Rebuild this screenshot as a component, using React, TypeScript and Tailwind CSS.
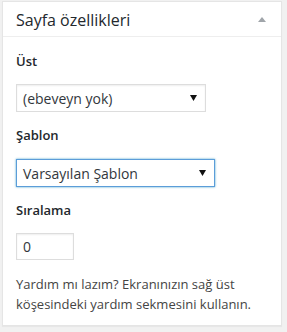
import React from "react";

const font = { fontFamily: '"Open Sans", "Noto Sans", sans-serif' };

function Caret() {
  return (
    <svg width="7" height="6" viewBox="0 0 7 6" className="shrink-0">
      <path d="M0 0 H7 L3.5 6 Z" fill="#111" />
    </svg>
  );
}

function FakeSelect({ value, width, focused }: { value: string; width: string; focused?: boolean }) {
  return (
    <div
      className={`${width} flex h-[28px] items-center justify-between border bg-white pl-[6px] pr-[8px] text-[14px] text-[#32373c] ${
        focused ? "border-[#5b9dd9] shadow-[0_0_2px_rgba(30,140,190,0.8)]" : "border-[#ddd] shadow-[inset_0_1px_2px_rgba(0,0,0,0.07)]"
      }`}
    >
      <span>{value}</span>
      <Caret />
    </div>
  );
}

export default function App() {
  return (
    <div className="min-h-[332px] w-[287px] bg-[#f1f1f1] pt-px pl-[2px]" style={font}>
      <div className="w-[280px] border border-[#e5e5e5] bg-white shadow-[0_1px_1px_rgba(0,0,0,0.04)]">
        <div className="flex h-[35px] items-center justify-between border-b border-[#eee] pl-[13px] pr-[15px]">
          <h2 className="pt-px text-[16px] leading-none text-[#23282d]">Sayfa özellikleri</h2>
          <svg width="8" height="5" viewBox="0 0 8 5">
            <path d="M0 5 L4 0 L8 5 Z" fill="#a0a5aa" />
          </svg>
        </div>
        <div className="px-[13px] pt-[15px] pb-[11px] text-[13px] text-[#444]">
          <p className="font-semibold leading-[19px] text-[#23282d]">Üst</p>
          <div className="mt-[13px]">
            <FakeSelect value="(ebeveyn yok)" width="w-[190px]" />
          </div>
          <p className="mt-[14px] font-semibold leading-[19px] text-[#23282d]">Şablon</p>
          <div className="mt-[14px]">
            <FakeSelect value="Varsayılan Şablon" width="w-[199px]" focused />
          </div>
          <p className="mt-[14px] font-semibold leading-[19px] text-[#23282d]">Sıralama</p>
          <div className="mt-[13px] flex h-[27px] w-[58px] items-center border border-[#ddd] pl-[6px] text-[14px] text-[#32373c] shadow-[inset_0_1px_2px_rgba(0,0,0,0.07)]">
            0
          </div>
          <p className="mt-[14px] leading-[20px]">
            Yardım mı lazım? Ekranınızın sağ üst köşesindeki yardım sekmesini kullanın.
          </p>
        </div>
      </div>
    </div>
  );
}
